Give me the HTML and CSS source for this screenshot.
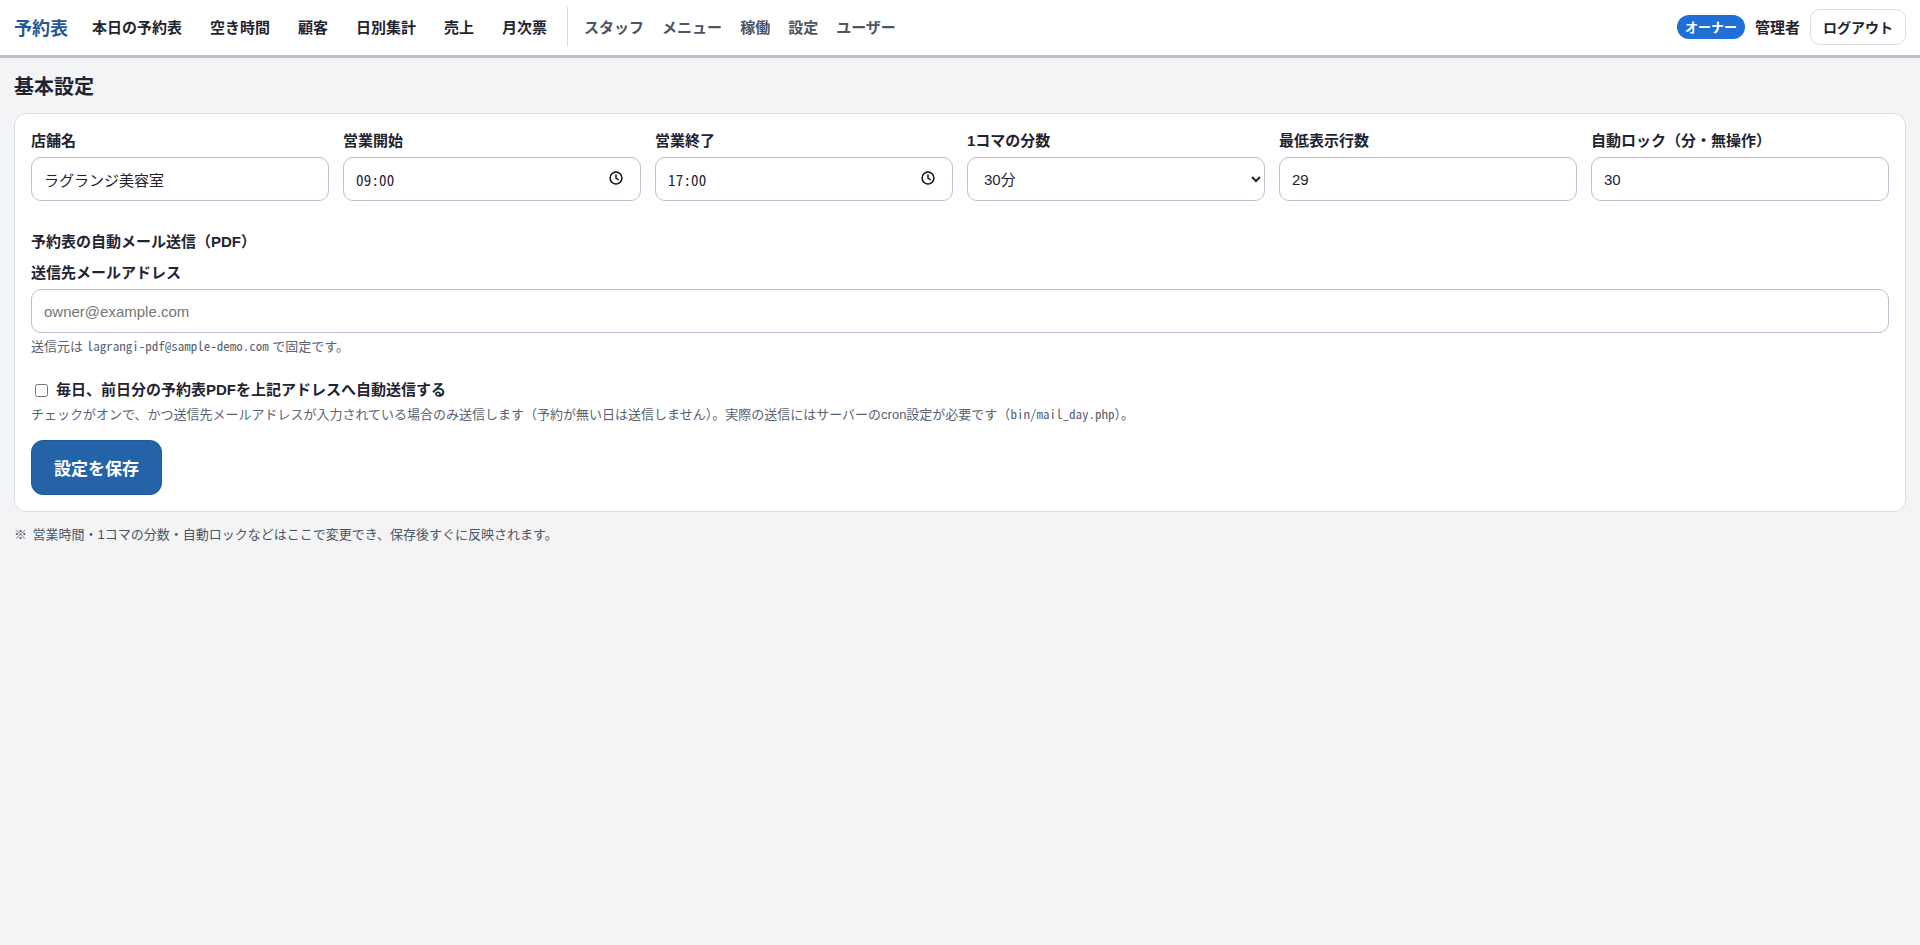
FILE: index.html
```html
<!DOCTYPE html>
<html lang="ja">
<head>
<meta charset="utf-8">
<title>基本設定</title>
<link rel="stylesheet" href="styles.css">
</head>
<body>
<header class="topbar">
  <a class="brand" href="#">予約表</a>
  <nav class="nav">
    <a href="#">本日の予約表</a>
    <a href="#">空き時間</a>
    <a href="#">顧客</a>
    <a href="#">日別集計</a>
    <a href="#">売上</a>
    <a href="#">月次票</a>
  </nav>
  <span class="divider"></span>
  <nav class="nav nav-sub">
    <a href="#">スタッフ</a>
    <a href="#">メニュー</a>
    <a href="#">稼働</a>
    <a href="#">設定</a>
    <a href="#">ユーザー</a>
  </nav>
  <div class="account">
    <span class="badge">オーナー</span>
    <span class="user">管理者</span>
    <button class="logout" type="button">ログアウト</button>
  </div>
</header>
<main class="page">
  <h1 class="title">基本設定</h1>
  <form class="card">
    <div class="grid">
      <div class="field"><label>店舗名</label><input class="control" type="text" value="ラグランジ美容室"></div>
      <div class="field"><label>営業開始</label><div class="time"><input class="control control-time" type="text" value="09:00"><svg class="clock" viewBox="0 0 16 16"><circle cx="8" cy="8" r="5.9"/><path d="M8 4.4V8.2L10.6 10"/></svg></div></div>
      <div class="field"><label>営業終了</label><div class="time"><input class="control control-time" type="text" value="17:00"><svg class="clock" viewBox="0 0 16 16"><circle cx="8" cy="8" r="5.9"/><path d="M8 4.4V8.2L10.6 10"/></svg></div></div>
      <div class="field"><label>1コマの分数</label><select class="control"><option>30分</option></select></div>
      <div class="field"><label>最低表示行数</label><input class="control" type="number" value="29"></div>
      <div class="field"><label>自動ロック（分・無操作）</label><input class="control" type="number" value="30"></div>
    </div>
    <h2 class="section">予約表の自動メール送信（PDF）</h2>
    <div class="field"><label>送信先メールアドレス</label><input class="control" type="email" placeholder="owner@example.com"></div>
    <p class="hint">送信元は <code>lagrangi-pdf@sample-demo.com</code> で固定です。</p>
    <label class="check"><input type="checkbox"><span>毎日、前日分の予約表PDFを上記アドレスへ自動送信する</span></label>
    <p class="hint hint-check">チェックがオンで、かつ送信先メールアドレスが入力されている場合のみ送信します（予約が無い日は送信しません）。実際の送信にはサーバーのcron設定が必要です（<code>bin/mail_day.php</code>）。</p>
    <button class="save" type="button">設定を保存</button>
  </form>
  <p class="note">※ 営業時間・1コマの分数・自動ロックなどはここで変更でき、保存後すぐに反映されます。</p>
</main>
</body>
</html>
```
FILE: styles.css
```css
* { box-sizing: border-box; }
html, body { margin: 0; height: 100%; }
body {
  background: #f3f4f6;
  color: #1f2430;
  font-family: "Liberation Sans", "Noto Sans CJK JP", sans-serif;
  font-size: 15px;
}
a { text-decoration: none; color: inherit; }

.topbar {
  display: flex;
  align-items: center;
  height: 58px;
  padding: 0 14px 2px 14px;
  background: #fff;
  border-bottom: 3px solid #b9c0cf;
}
.brand { font-size: 18px; font-weight: 700; color: #1f5a96; margin-right: 24px; }
.nav { display: flex; gap: 28px; font-size: 15px; font-weight: 700; color: #1f2430; }
.divider { width: 1px; height: 39px; background: #d5d9e2; margin: 0 16px 0 20px; }
.nav-sub { gap: 18px; color: #4b5563; }
.account { display: flex; align-items: center; gap: 10px; margin-left: auto; }
.badge {
  display: flex; align-items: center; justify-content: center;
  width: 68px; height: 24px;
  border-radius: 12px;
  background: #1f6fd6; color: #fff;
  font-size: 13px; font-weight: 700;
}
.user { font-size: 15px; font-weight: 700; }
.logout {
  width: 96px; height: 36px;
  background: #fff;
  border: 1px solid #d9dde6;
  border-radius: 10px;
  color: #1f2430;
  font: 700 14px "Liberation Sans", "Noto Sans CJK JP", sans-serif;
}

.page { padding: 14px; }
.title { margin: 0 0 11px; font-size: 20px; font-weight: 700; line-height: 30px; color: #1f2430; }
.card {
  background: #fff;
  border: 1px solid #d9dde6;
  border-radius: 12px;
  padding: 16px 16px 16px;
}
.grid { display: grid; grid-template-columns: repeat(6, 1fr); gap: 14px; }
.field { display: flex; flex-direction: column; gap: 5px; }
.field label { font-size: 15px; font-weight: 700; line-height: 22px; }
.control {
  width: 100%; height: 44px;
  padding: 0 12px;
  background: #fff;
  border: 1px solid #b9c0cf;
  border-radius: 10px;
  color: #1f2430;
  font: 15px "Liberation Sans", "Noto Sans CJK JP", sans-serif;
}
.control::placeholder { color: #757575; }
.time { position: relative; }
.control-time { font-family: "Noto Sans Mono CJK JP", "Liberation Mono", monospace; letter-spacing: .2px; }
.clock {
  position: absolute; top: 13px; right: 17px;
  width: 16px; height: 16px;
  fill: none; stroke: #111; stroke-width: 1.5;
}
.section { margin: 30px 0 9px; font-size: 15px; font-weight: 700; line-height: 22px; }
.hint { margin: 4px 0 0; font-size: 13px; line-height: 18px; color: #5b6270; }
code { font-family: "Noto Sans Mono CJK JP", "Liberation Mono", monospace; font-size: 13px; }
.check { display: flex; align-items: center; gap: 8px; margin: 24px 0 0 4px; font-size: 15px; font-weight: 700; line-height: 20px; }
.check input { width: 13px; height: 13px; margin: 0; }
.hint-check { margin-top: 5px; }
.save {
  display: block;
  width: 131px; height: 55px;
  margin-top: 16px;
  background: #2563a8;
  border: 1px solid #1f5a96;
  border-radius: 12px;
  color: #fff;
  font: 700 17px "Liberation Sans", "Noto Sans CJK JP", sans-serif;
}
.note { margin: 14px 0 0; font-size: 13px; line-height: 18px; color: #4b5563; word-spacing: 2px; }
```
